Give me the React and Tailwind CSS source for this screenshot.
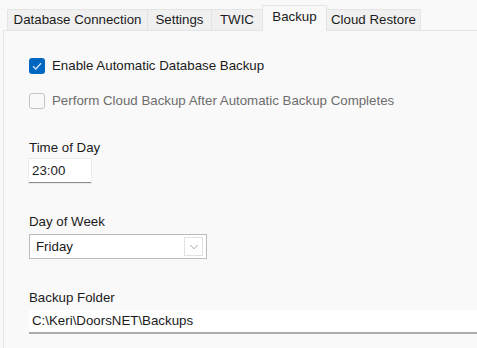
import { ChevronDown } from 'lucide-react'

const TABS = [
  { label: 'Database Connection', w: 'w-[141px]' },
  { label: 'Settings', w: 'w-[64px]' },
  { label: 'TWIC', w: 'w-[51px]' },
  { label: 'Backup', w: 'w-[65px]', active: true },
  { label: 'Cloud Restore', w: 'w-[94px]' },
]

function Check({ checked, disabled, label }) {
  return (
    <div className="flex items-center h-[16px]">
      {checked ? (
        <div className="w-[16px] h-[16px] rounded-[3px] bg-[#0067c0] flex items-center justify-center">
          <svg width="10" height="8" viewBox="0 0 10 8" fill="none">
            <path d="M1 4.2 L3.8 7 L9 1.2" stroke="#cfe1f5" strokeWidth="1.3" />
          </svg>
        </div>
      ) : (
        <div className="w-[16px] h-[16px] rounded-[3px] border border-[#c4c4c4] bg-[#f9f9f9]" />
      )}
      <span className={`ml-[7px] ${disabled ? 'text-[#6d6d6d]' : 'text-[#1b1b1b]'}`}>{label}</span>
    </div>
  )
}

export default function App() {
  return (
    <div className="w-[477px] h-[348px] overflow-hidden bg-[#f9f9f9] text-[13.3px] text-[#1b1b1b]" style={{ fontFamily: '"Liberation Sans", Arial, sans-serif' }}>
      <div className="flex items-end pl-[7px] pt-[4px] h-[30px] relative z-10">
        {TABS.map(t => (
          <div
            key={t.label}
            className={`${t.w} flex items-center justify-center border-t border-r border-[#e5e5e5] ${
              t.active
                ? 'h-[26px] bg-[#f9f9f9] border-l -ml-px -mb-px pb-[4px]'
                : 'h-[21px] bg-[#f0f0f0] first:border-l'
            }`}
          >
            {t.label}
          </div>
        ))}
      </div>
      <div className="ml-[3px] border-l border-t border-[#e5e5e5] h-[319px] pl-[25px] pt-[27px]">
        <Check checked label="Enable Automatic Database Backup" />
        <div className="mt-[19px]">
          <Check disabled label="Perform Cloud Backup After Automatic Backup Completes" />
        </div>
        <div className="mt-[32px] leading-[14px]">Time of Day</div>
        <div className="mt-[4px] w-[62px] h-[24px] bg-white border-b border-[#8a8a8a] shadow-[0_0_0_1px_#ececec] flex items-center pl-[3px]">
          23:00
        </div>
        <div className="mt-[32px] leading-[14px]">Day of Week</div>
        <div className="mt-[5px] w-[178px] h-[25px] bg-white border border-[#bcbcbc] flex items-center justify-between pl-[6px] pr-[3px]">
          <span>Friday</span>
          <div className="w-[19px] h-[19px] border border-[#e2e2e2] flex items-center justify-center">
            <ChevronDown size={14} strokeWidth={1} color="#6b6b6b" />
          </div>
        </div>
        <div className="mt-[32px] leading-[14px]">Backup Folder</div>
        <div className="mt-[5px] h-[24px] bg-white border-b-2 border-[#adadad] flex items-center pl-[3px]">
          C:\Keri\DoorsNET\Backups
        </div>
      </div>
    </div>
  )
}
